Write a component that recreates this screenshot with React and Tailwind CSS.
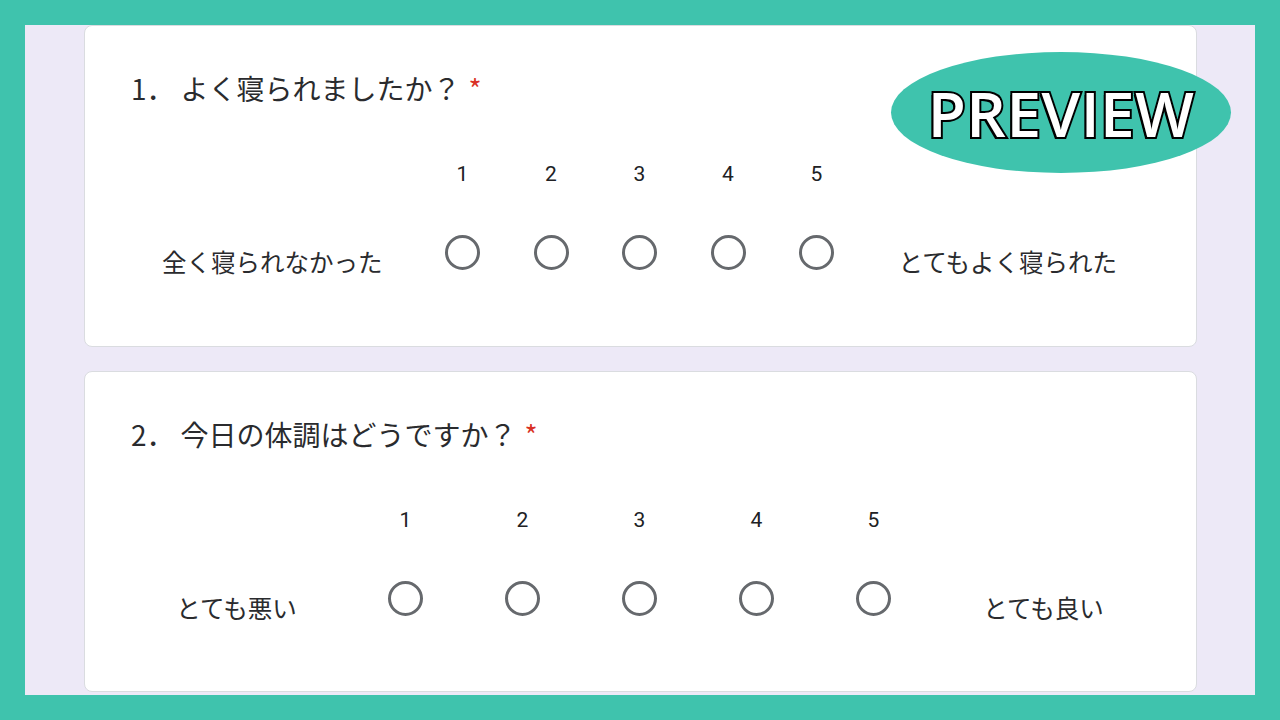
const jp = "font-['Noto_Sans_CJK_JP',sans-serif]";

const questions = [
  {
    num: "1．",
    title: "よく寝られましたか？",
    low: "全く寝られなかった",
    high: "とてもよく寝られた",
    lowWidth: "w-[292px]",
    highWidth: "w-[294px]",
    colWidth: "w-[88.5px]",
    height: "h-[322px]"
  },
  {
    num: "2．",
    title: "今日の体調はどうですか？",
    low: "とても悪い",
    high: "とても良い",
    lowWidth: "w-[221px]",
    highWidth: "w-[223px]",
    colWidth: "w-[117px]",
    height: "h-[321px]"
  }
];

function ScaleQuestion({ question }) {
  return (
    <div
      className={`${question.height} shrink-0 rounded-[8px] border border-[#dadce0] bg-white ${jp}`}
    >
      <div className="pl-[46px] pt-[42px] text-[28px] leading-[40px] text-[#2a2b2e]">
        <span className="mr-[6px]">{question.num}</span>
        {question.title}
        <span className="ml-[8px] text-[#d93025]">*</span>
      </div>
      <div className="mt-[51px] flex justify-center">
        <div
          className={`${question.lowWidth} pt-[87px] text-center text-[24.5px] leading-[32px] text-[#2a2b2e]`}
        >
          {question.low}
        </div>
        {[1, 2, 3, 4, 5].map((n) => (
          <div key={n} className={`${question.colWidth} flex flex-col items-center`}>
            <span className="font-['Roboto',sans-serif] text-[21px] leading-[30px] text-[#202124]">
              {n}
            </span>
            <span className="mt-[46px] h-[35px] w-[35px] rounded-full border-[3px] border-[#66696d]" />
          </div>
        ))}
        <div
          className={`${question.highWidth} pt-[87px] text-center text-[24.5px] leading-[32px] text-[#2a2b2e]`}
        >
          {question.high}
        </div>
      </div>
    </div>
  );
}

export default function App() {
  return (
    <div className="relative h-[720px] w-[1280px] overflow-hidden bg-[#3fc3ad] p-[25px]">
      <div className="flex h-full flex-col gap-[24px] overflow-hidden bg-[#ede9f7] pl-[59px] pr-[58px]">
        {questions.map((question) => (
          <ScaleQuestion key={question.title} question={question} />
        ))}
      </div>
      <div className="absolute left-[891px] top-[52px] flex h-[121px] w-[340px] items-center justify-center rounded-[50%] bg-[#3fc3ad]">
        <span className="font-['Open_Sans',sans-serif] text-[62px] font-semibold leading-none tracking-[0.5px] text-white [-webkit-text-stroke:4px_#000] [paint-order:stroke_fill] [text-shadow:-2px_2px_0_#000]">
          PREVIEW
        </span>
      </div>
    </div>
  );
}
